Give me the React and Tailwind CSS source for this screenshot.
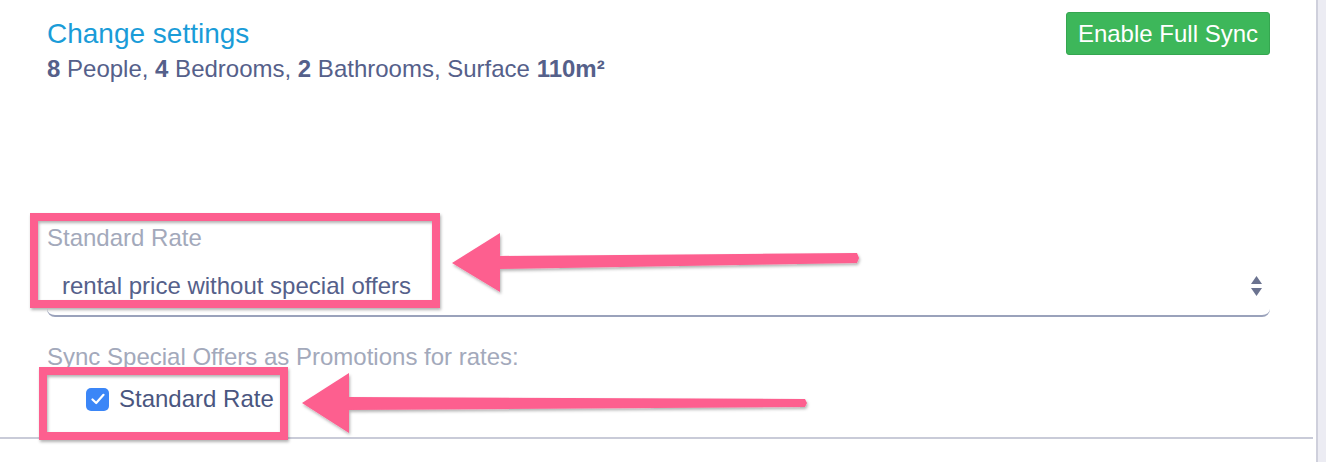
import React from 'react';

const PINK = '#fd5e8f';

// Annotation layer: pink boxes and arrows drawn over the form
const Annotations = () => (
  <svg
    className="absolute inset-0 pointer-events-none"
    width="1326"
    height="462"
    viewBox="0 0 1326 462"
  >
    <defs>
      <filter id="shadow" x="-10%" y="-20%" width="120%" height="140%">
        <feDropShadow dx="1" dy="2" stdDeviation="1.5" floodColor="#000" floodOpacity="0.3" />
      </filter>
    </defs>
    <g filter="url(#shadow)">
      <rect x="34" y="217" width="402" height="87" fill="none" stroke={PINK} strokeWidth="8" />
      <rect x="43" y="371" width="241" height="65" fill="none" stroke={PINK} strokeWidth="8" />
      <polygon points="452,263 500,233 500,292" fill={PINK} />
      <polygon points="498,256 857,253 859,258 857,263 498,269" fill={PINK} />
      <polygon points="302,403 349,373 349,433" fill={PINK} />
      <polygon points="347,397 805,399 807,403 805,407 347,410" fill={PINK} />
    </g>
  </svg>
);

const SelectArrows = () => (
  <svg width="11" height="20" viewBox="0 0 11 20">
    <polygon points="5.5,0 11,8 0,8" fill="#6b7390" />
    <polygon points="0,12 11,12 5.5,20" fill="#6b7390" />
  </svg>
);

const CheckBox = () => (
  <div className="w-[23px] h-[23px] rounded-[5px] bg-[#3b86f7] flex items-center justify-center">
    <svg width="14" height="12" viewBox="0 0 14 12">
      <path d="M1.5 6.5 L5.2 10 L12.5 1.8" fill="none" stroke="#fff" strokeWidth="2.2" strokeLinecap="round" strokeLinejoin="round" />
    </svg>
  </div>
);

export default function App() {
  return (
    <div className="relative w-[1326px] h-[462px] bg-white flex font-['Liberation_Sans',Arial,sans-serif] overflow-hidden">
      <div className="w-[1316px] flex flex-col">
        <div className="pt-[12px] pb-[24px] border-b-2 border-[#c9cbd8] mr-[3px]">
          <div className="pl-[47px] pr-[43px]">
            {/* Header */}
            <div className="flex justify-between items-start">
              <div>
                <h2 className="mt-[6px] text-[28px] leading-[32px] text-[#1a9cd8]">Change settings</h2>
                <p className="mt-[5px] text-[24px] leading-[28px] text-[#55608a]">
                  <b>8</b> People, <b>4</b> Bedrooms, <b>2</b> Bathrooms, Surface <b>110m²</b>
                </p>
              </div>
              <button className="h-[43px] px-[11px] rounded-[3px] bg-[#3db75a] border border-[#35a650] text-white text-[24px] leading-[28px]">
                Enable Full Sync
              </button>
            </div>

            {/* Standard rate select */}
            <div className="mt-[141px] w-[1223px]">
              <div className="text-[24px] leading-[28px] text-[#a3a9bb]">Standard Rate</div>
              <div className="mt-[20px] pb-[15px] pl-[15px] pr-[8px] border-b-2 border-[#9aa2bb] rounded-b-[8px] flex justify-between items-center">
                <span className="text-[24px] leading-[28px] text-[#55608a]">rental price without special offers</span>
                <SelectArrows />
              </div>
            </div>

            {/* Promotions */}
            <div className="mt-[26px] text-[24px] leading-[28px] text-[#a3a9bb]">
              Sync Special Offers as Promotions for rates:
            </div>
            <label className="mt-[14px] ml-[39px] flex items-center gap-[10px]">
              <CheckBox />
              <span className="text-[24px] leading-[28px] text-[#4a5680]">Standard Rate</span>
            </label>
          </div>
        </div>
      </div>
      <div className="w-[10px] bg-[#ececf3] border-l-2 border-[#cfd0dc]" />
      <Annotations />
    </div>
  );
}
